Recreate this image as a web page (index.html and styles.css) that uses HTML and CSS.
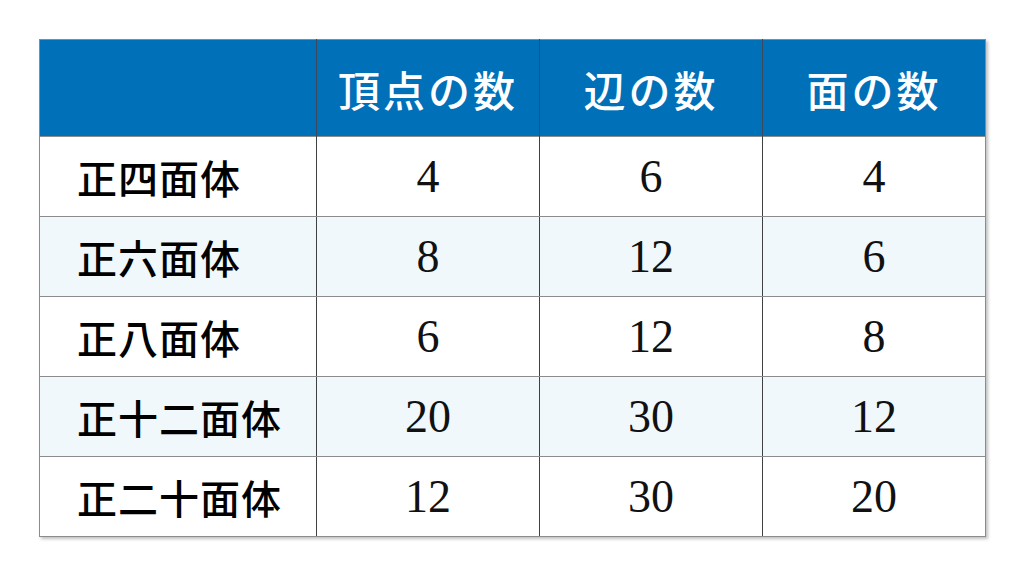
FILE: index.html
```html
<!DOCTYPE html>
<html lang="ja">
<head>
<meta charset="utf-8">
<link rel="stylesheet" href="styles.css">
</head>
<body>
<div class="wrap">
<table class="poly">
  <colgroup>
    <col class="c-name"><col class="c-num"><col class="c-num"><col class="c-num">
  </colgroup>
  <thead>
    <tr><th></th><th>頂点の数</th><th>辺の数</th><th>面の数</th></tr>
  </thead>
  <tbody>
    <tr><td class="name">正四面体</td><td>4</td><td>6</td><td>4</td></tr>
    <tr class="alt"><td class="name">正六面体</td><td>8</td><td>12</td><td>6</td></tr>
    <tr><td class="name">正八面体</td><td>6</td><td>12</td><td>8</td></tr>
    <tr class="alt"><td class="name">正十二面体</td><td>20</td><td>30</td><td>12</td></tr>
    <tr><td class="name">正二十面体</td><td>12</td><td>30</td><td>20</td></tr>
  </tbody>
</table>
</div>
</body>
</html>
```

FILE: styles.css
```css
html, body {
  margin: 0;
  padding: 0;
  background: #ffffff;
}
.wrap {
  width: 1024px;
  height: 576px;
  padding: 39px 0 0 39px;
  box-sizing: border-box;
}
.poly {
  border-collapse: collapse;
  width: 946px;
  table-layout: fixed;
  box-shadow: 2px 2px 3px rgba(0,0,0,0.25);
}
.c-name { width: 277px; }
.c-num { width: 223px; }
.poly th {
  height: 96px;
  padding: 0;
  background: #0070b9;
  color: #ffffff;
  font-family: "Noto Sans CJK JP", sans-serif;
  font-weight: 500;
  font-size: 42px;
  letter-spacing: 3px;
  text-align: center;
  border-left: 1px solid #3a4a5a;
  border-right: 1px solid #3a4a5a;
  border-top: 1px solid #8a8a8a;
}
.poly th:first-child { border-left: 1px solid #8a8a8a; }
.poly th:last-child { border-right: 1px solid #8a8a8a; }
.poly td {
  height: 79px;
  padding: 0;
  text-align: center;
  font-family: "Liberation Serif", "Times New Roman", serif;
  font-size: 46px;
  color: #111111;
  border-top: 1px solid #8c8c8c;
  border-bottom: 1px solid #8c8c8c;
  border-left: 1px solid #404040;
  border-right: 1px solid #404040;
  background: #ffffff;
}
.poly td:first-child { border-left: 1px solid #8c8c8c; }
.poly td:last-child { border-right: 1px solid #8c8c8c; }
.poly tr.alt td { background: #f0f8fc; }
.poly td.name {
  text-align: left;
  padding-left: 37px;
  font-family: "Noto Sans CJK JP", sans-serif;
  font-weight: 500;
  font-size: 40px;
  letter-spacing: 1px;
  color: #000000;
}
```
